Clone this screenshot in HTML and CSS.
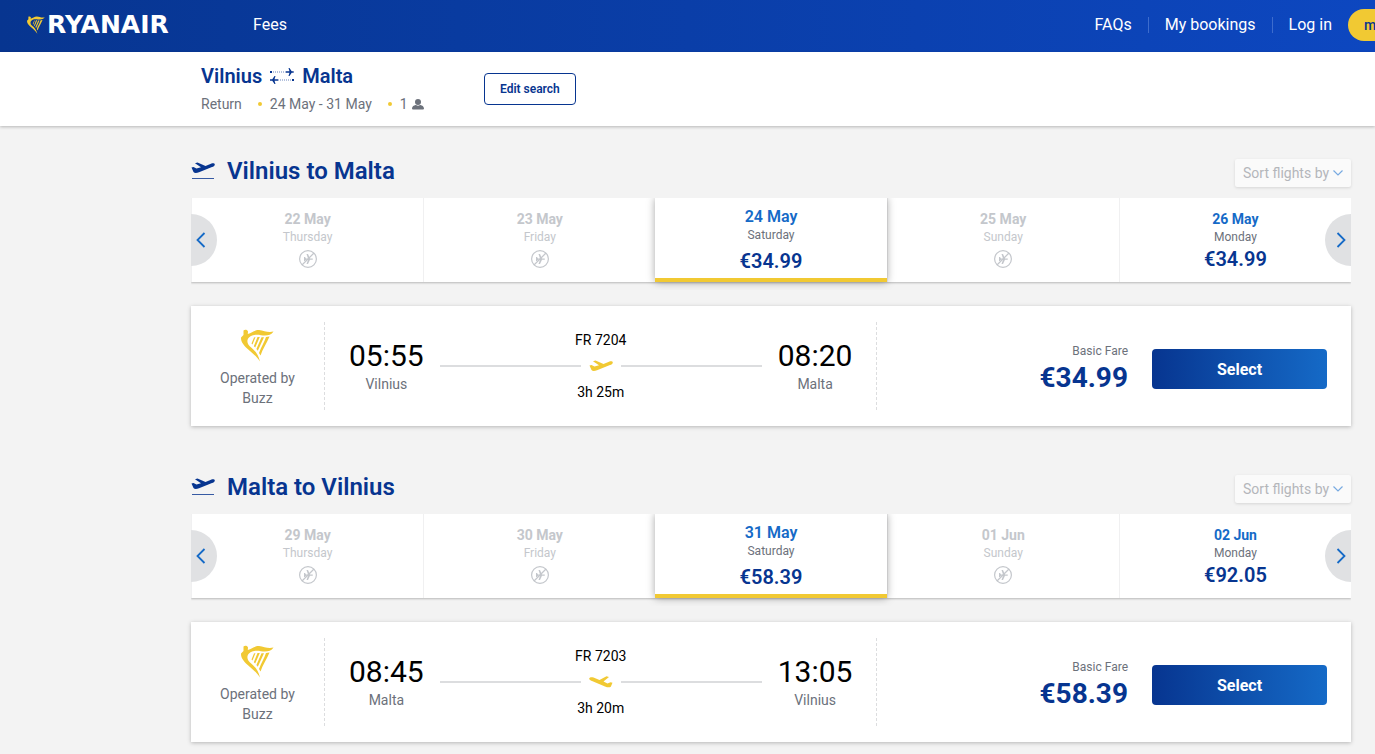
FILE: index.html
```
<!DOCTYPE html>
<html lang="en">
<head>
  <meta charset="UTF-8">
  <meta name="viewport" content="width=device-width, initial-scale=1.0">
  <title>Ryanair - Select flights</title>
  <link rel="stylesheet" href="styles.css">
</head>
<body>
<!-- Shared icons -->
<svg class="sprite" aria-hidden="true">
  <symbol id="harp" viewBox="0 0 33 33">
    <path d="M2.500 1.500 C4 .3 6.500 .8 7 2.500 L6.800 5 C11 4 13 1 18 1 C23 1.500 27 4 32.500 2.500 C30 6.500 25 7 20 6.200 C15 5.200 11 6 8 8.500 C5.500 11 6 14.500 9 17.500 C14 21.500 17 25 19 32.500 C15 26.500 10 23 5 18.500 C1 14 0 12 0 8.500 L2.500 6 Z"/>
    <path d="M13 8.500 L14.500 8 L11.500 15.500 L10.500 14.500 Z M16.500 8 L18.800 8 L14.200 18.500 L12.800 17.200 Z M20.500 8.200 L23 8.200 L16.800 21.800 L15.400 20 Z M25 8 L28.500 7.500 C26 14 21.500 20 19.500 26.500 L18 24 C20 18 23.500 13 25 8 Z"/>
  </symbol>
  <symbol id="plane" viewBox="0 0 24 12">
    <path d="M.5 5.500 L2.500 5 L5.500 6.500 L10 5.300 L4 1.300 L6.500 .5 L14.500 3.900 L20 1.800 C22 1 23.500 1.400 23.800 2.400 C24 3.500 22.500 4.500 21 5 L8 10.200 C5.500 11.200 3.500 11.200 2.500 10 Z"/>
  </symbol>
  <symbol id="plane-left" viewBox="0 0 24 12">
    <path d="M.2 2.500 C.6 1.200 2.500 .8 4.500 1.500 L10.500 4 L17.500 .3 L20 1 L14.500 5.600 L18.500 7.600 L21.500 6.300 L23.500 6.800 L21.800 10.800 C20.500 11.700 18.500 11.500 16 10.500 L3 5 C1.200 4.200 0 3.500 .2 2.500 Z"/>
  </symbol>
  <symbol id="no-flight" viewBox="0 0 18 18">
    <circle cx="9" cy="9" r="8.400" fill="none" stroke="currentColor" stroke-width="1.200"/>
    <path d="M5 7 L6 7 L7 8.500 L9 8.500 L7.500 4 L9 4 L11 8.500 L13.500 8.500 Q14.500 9 13.500 9.800 L11 9.800 L9 14 L7.500 14 L9 9.800 L7 9.800 L6 11 L5 11 Z" fill="currentColor"/>
    <path d="M15 3 L3 15" stroke="currentColor" stroke-width="1.200"/>
  </symbol>
  <symbol id="chevron" viewBox="0 0 10 16">
    <path d="M8.500 1 L1.500 8 L8.500 15" fill="none" stroke="currentColor" stroke-width="1.800"/>
  </symbol>
</svg>

<header class="header">
  <a class="logo" href="#"><svg class="logo-harp"><use href="#harp"/></svg>RYANAIR</a>
  <nav class="nav-left"><a href="#">Fees</a></nav>
  <nav class="nav-right">
    <a href="#">FAQs</a>
    <a href="#">My bookings</a>
    <a href="#">Log in</a>
    <a class="my-ryanair" href="#">myRyanair</a>
  </nav>
</header>

<section class="trip">
  <div class="trip-details">
    <div class="route">
      <span>Vilnius</span>
      <svg class="route-arrows" viewBox="0 0 24 16">
        <path d="M0 3h2v2H0z M16 3.200h3.500l-1-3.200h1l2.200 3.200h2v1.600h-2L19.500 8h-1l1-3.200H16z M22 11h2v2h-2z M8 11.200H4.500l1-3.200h-1L2.300 11.200H0v1.600h2.300L4.500 16h1l-1-3.200H8z" fill="#073590"/>
        <path d="M3 4H16 M8 12H21" stroke="#073590" stroke-dasharray="1 1" opacity=".6"/>
      </svg>
      <span>Malta</span>
    </div>
    <div class="trip-info">
      <span>Return</span>
      <span class="dotted">24 May - 31 May</span>
      <span class="dotted">1
        <svg class="person" viewBox="0 0 12 11"><circle cx="6" cy="3" r="3"/><path d="M0 9.500 C0 7 3 6 4 6 Q6 7.500 8 6 C9 6 12 7 12 9.500 Q12 10.500 11 10.500 H1 Q0 10.500 0 9.500Z"/></svg>
      </span>
    </div>
  </div>
  <button class="edit-search" type="button">Edit search</button>
</section>

<main class="journeys">
  <section class="journey">
    <div class="journey-header">
      <svg class="takeoff" viewBox="0 0 24 18"><use href="#plane" width="24" height="12"/><path d="M1 16.500H23" stroke="currentColor" opacity=".8"/></svg>
      <h2>Vilnius to Malta</h2>
      <div class="sort">
        <select aria-label="Sort flights by"><option>Sort flights by</option></select>
        <svg viewBox="0 0 10 6"><path d="M.5 .5 L5 5 L9.500 .5" fill="none" stroke="currentColor" stroke-width="1.200"/></svg>
      </div>
    </div>
    <div class="dates">
      <button class="date disabled" type="button"><b>22 May</b><small>Thursday</small><svg class="no-flight"><use href="#no-flight"/></svg></button>
      <button class="date disabled" type="button"><b>23 May</b><small>Friday</small><svg class="no-flight"><use href="#no-flight"/></svg></button>
      <button class="date selected" type="button"><b>24 May</b><small>Saturday</small><span class="price">€34.99</span></button>
      <button class="date disabled" type="button"><b>25 May</b><small>Sunday</small><svg class="no-flight"><use href="#no-flight"/></svg></button>
      <button class="date" type="button"><b>26 May</b><small>Monday</small><span class="price">€34.99</span></button>
      <button class="arrow prev" type="button" aria-label="Previous dates"><svg><use href="#chevron"/></svg></button>
      <button class="arrow next" type="button" aria-label="Next dates"><svg><use href="#chevron"/></svg></button>
    </div>
    <article class="flight">
      <div class="carrier">
        <svg class="carrier-harp"><use href="#harp"/></svg>
        <span>Operated by<br>Buzz</span>
      </div>
      <div class="flight-info">
        <div class="stop"><time>05:55</time><span>Vilnius</span></div>
        <div class="duration">
          <span>FR 7204</span>
          <div class="line"><svg><use href="#plane"/></svg></div>
          <span>3h 25m</span>
        </div>
        <div class="stop"><time>08:20</time><span>Malta</span></div>
      </div>
      <div class="fare">
        <div class="fare-price"><small>Basic Fare</small><strong>€34.99</strong></div>
        <button class="select-btn" type="button">Select</button>
      </div>
    </article>
  </section>

  <section class="journey">
    <div class="journey-header">
      <svg class="takeoff" viewBox="0 0 24 18"><use href="#plane" width="24" height="12"/><path d="M1 16.500H23" stroke="currentColor" opacity=".8"/></svg>
      <h2>Malta to Vilnius</h2>
      <div class="sort">
        <select aria-label="Sort flights by"><option>Sort flights by</option></select>
        <svg viewBox="0 0 10 6"><path d="M.5 .5 L5 5 L9.500 .5" fill="none" stroke="currentColor" stroke-width="1.200"/></svg>
      </div>
    </div>
    <div class="dates">
      <button class="date disabled" type="button"><b>29 May</b><small>Thursday</small><svg class="no-flight"><use href="#no-flight"/></svg></button>
      <button class="date disabled" type="button"><b>30 May</b><small>Friday</small><svg class="no-flight"><use href="#no-flight"/></svg></button>
      <button class="date selected" type="button"><b>31 May</b><small>Saturday</small><span class="price">€58.39</span></button>
      <button class="date disabled" type="button"><b>01 Jun</b><small>Sunday</small><svg class="no-flight"><use href="#no-flight"/></svg></button>
      <button class="date" type="button"><b>02 Jun</b><small>Monday</small><span class="price">€92.05</span></button>
      <button class="arrow prev" type="button" aria-label="Previous dates"><svg><use href="#chevron"/></svg></button>
      <button class="arrow next" type="button" aria-label="Next dates"><svg><use href="#chevron"/></svg></button>
    </div>
    <article class="flight">
      <div class="carrier">
        <svg class="carrier-harp"><use href="#harp"/></svg>
        <span>Operated by<br>Buzz</span>
      </div>
      <div class="flight-info">
        <div class="stop"><time>08:45</time><span>Malta</span></div>
        <div class="duration">
          <span>FR 7203</span>
          <div class="line"><svg><use href="#plane-left"/></svg></div>
          <span>3h 20m</span>
        </div>
        <div class="stop"><time>13:05</time><span>Vilnius</span></div>
      </div>
      <div class="fare">
        <div class="fare-price"><small>Basic Fare</small><strong>€58.39</strong></div>
        <button class="select-btn" type="button">Select</button>
      </div>
    </article>
  </section>
</main>
</body>
</html>
```

FILE: styles.css
```
* { box-sizing: border-box; }
body {
  margin: 0;
  font-family: Roboto, "Liberation Sans", sans-serif;
  font-size: 14px;
  line-height: 20px;
  color: #6c717b;
  background: #f3f3f3;
  overflow-x: hidden;
}
button, select { font-family: inherit; }
button { cursor: pointer; }
a { color: inherit; text-decoration: none; }
svg { display: block; flex: none; }
.sprite { position: absolute; width: 0; height: 0; }

/* Header */
.header {
  display: flex;
  align-items: center;
  height: 52px;
  padding-left: 27px;
  padding-bottom: 2px;
  overflow: hidden;
  color: #fff;
  font-size: 16px;
  background: linear-gradient(90deg, #073590, #0d47c0);
}
.logo {
  display: flex;
  align-items: center;
  gap: 2px;
  width: 226px;
  font: bold 25px/32px "DejaVu Sans", sans-serif;
}
.logo-harp { width: 18px; height: 18px; fill: #f1c933; }
.nav-right {
  display: flex;
  align-items: center;
  margin-left: auto;
  margin-right: -71px;
}
.nav-right a { padding: 0 16px; line-height: 16px; }
.nav-right a + a { border-left: 1px solid #3d6ccd; }
.nav-right .my-ryanair {
  border: 0;
  border-radius: 16px;
  color: #073590;
  background: #f1c933;
  font-size: 14px;
  font-weight: 500;
  line-height: 32px;
}

/* Trip summary */
.trip {
  display: flex;
  align-items: center;
  height: 74px;
  padding-left: 201px;
  background: #fff;
  box-shadow: 0 1px 3px rgba(0,0,0,0.25);
}
.trip-details { width: 283px; }
.route {
  display: flex;
  align-items: center;
  gap: 8px;
  margin-bottom: 6px;
  color: #073590;
  font-size: 20px;
  font-weight: 600;
  line-height: 24px;
}
.route-arrows { width: 24px; height: 16px; }
.trip-info { display: flex; gap: 16px; }
.dotted { display: flex; align-items: center; gap: 4px; }
.dotted::before {
  content: "";
  width: 4px;
  height: 4px;
  margin-right: 4px;
  border-radius: 50%;
  background: #f1c933;
}
.person { width: 12px; height: 11px; fill: #6c717b; }
.edit-search {
  height: 32px;
  padding: 0 15px;
  border: 1px solid #073590;
  border-radius: 4px;
  color: #073590;
  background: #fff;
  font-size: 12px;
  font-weight: 600;
}

/* Journeys */
.journeys { padding: 29px 24px 12px 191px; }
.journey + .journey { margin-top: 45px; }
.journey-header {
  display: flex;
  align-items: center;
  height: 32px;
  margin-bottom: 11px;
  color: #073590;
}
.takeoff { width: 24px; height: 18px; margin-right: 12px; fill: currentColor; }
.journey-header h2 { margin: 0; font-size: 24px; font-weight: 600; line-height: 32px; }
.sort {
  display: flex;
  align-items: center;
  height: 28px;
  margin-left: auto;
  margin-top: 4px;
  padding: 0 8px;
  border-radius: 2px;
  color: #78aae1;
  background: #fafafa;
  box-shadow: 0 1px 3px rgba(0,0,0,0.12);
}
.sort select {
  appearance: none;
  padding: 0;
  border: 0;
  color: #b4b6ba;
  background: none;
  font-size: 14px;
}
.sort svg { width: 10px; height: 6px; margin-left: 3px; }

/* Date carousel */
.dates {
  position: relative;
  display: flex;
  height: 84px;
  margin-bottom: 24px;
  background: #fff;
  box-shadow: 0 1px 2px rgba(0,0,0,0.25);
  clip-path: inset(0 0 -8px 0);
}
.date {
  display: flex;
  flex: 1;
  flex-direction: column;
  align-items: center;
  padding: 12px 0 0;
  border: 0;
  border-left: 1px solid #f0f0f1;
  color: #6c717b;
  background: #fff;
}
.date b { color: #156ac7; font-size: 14px; font-weight: 700; line-height: 18px; }
.date small { font-size: 12px; line-height: 18px; }
.date .price { color: #073590; font-size: 20px; font-weight: 600; line-height: 26px; }
.date.disabled, .date.disabled b { color: #c4c7cc; }
.no-flight { width: 18px; height: 18px; margin-top: 4px; }
.date.selected {
  z-index: 1;
  padding-top: 9px;
  border-left: 0;
  border-bottom: 4px solid #f1c933;
  box-shadow: 0 0 8px rgba(0,0,0,0.35);
}
.date.selected b { font-size: 16px; font-weight: 600; line-height: 20px; }
.date.selected small { margin-bottom: 5px; line-height: 16px; }
.arrow {
  position: absolute;
  top: 16px;
  display: flex;
  align-items: center;
  width: 26px;
  height: 52px;
  padding: 0 5px;
  border: 0;
  color: #156ac7;
  background: #e0e1e3;
}
.arrow svg { width: 10px; height: 16px; }
.prev { left: 0; border-radius: 0 26px 26px 0; }
.next { right: 0; border-radius: 0 26px 26px 0; transform: rotate(180deg); }

/* Flight card */
.flight {
  display: grid;
  grid-template-columns: 134px 7fr 6fr;
  min-height: 120px;
  padding: 16px 0;
  background: #fff;
  box-shadow: 0 1px 4px rgba(0,0,0,0.25);
}
.carrier {
  display: flex;
  flex-direction: column;
  align-items: center;
  justify-content: flex-end;
  padding-bottom: 2px;
  border-right: 1px dashed #dcdddf;
  text-align: center;
}
.carrier-harp { width: 33px; height: 33px; margin-bottom: 6px; fill: #f1c933; }
.flight-info {
  display: flex;
  align-items: center;
  gap: 16px;
  padding: 0 24px;
  border-right: 1px dashed #dcdddf;
}
.stop { display: flex; flex-direction: column; align-items: center; }
.stop time { color: #000; font-size: 30px; line-height: 36px; }
.duration {
  display: flex;
  flex: 1;
  flex-direction: column;
  align-items: center;
  gap: 6px;
  color: #000;
}
.line { display: flex; align-items: center; gap: 8px; width: 100%; height: 20px; }
.line::before, .line::after { content: ""; flex: 1; height: 2px; background: #dcdddf; }
.line svg { width: 24px; height: 12px; fill: #f1c933; }
.fare {
  display: flex;
  align-items: center;
  justify-content: flex-end;
  gap: 24px;
  padding: 6px 24px 0 0;
}
.fare-price {
  display: flex;
  flex-direction: column;
  align-items: flex-end;
  gap: 1px;
  padding-bottom: 3px;
}
.fare-price small { font-size: 12px; line-height: 20px; }
.fare-price strong { color: #073590; font-size: 28px; font-weight: 700; line-height: 32px; }
.select-btn {
  width: 175px;
  height: 40px;
  border: 0;
  border-radius: 4px;
  color: #fff;
  background: linear-gradient(90deg, #073590, #156ac7);
  font-size: 16px;
  font-weight: 700;
}
```
